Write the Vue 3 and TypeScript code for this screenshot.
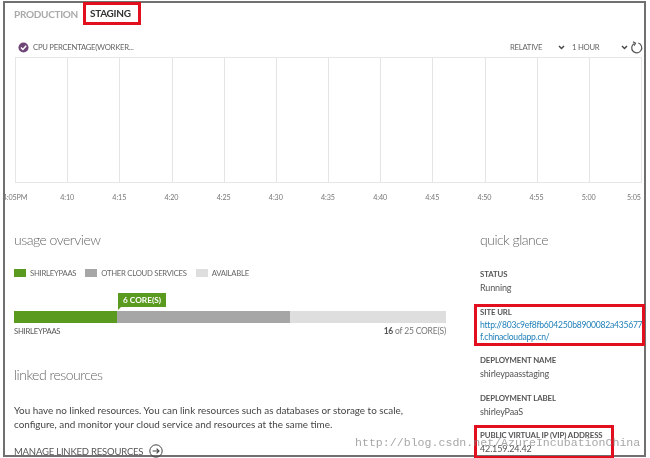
<script setup lang="ts">
const cells: number[] = Array.from({ length: 12 }, (_, i) => i)
const times: string[] = ['4:05PM', '4:10', '4:15', '4:20', '4:25', '4:30', '4:35', '4:40', '4:45', '4:50', '4:55', '5:00', '5:05']
const legend = [
  { name: 'SHIRLEYPAAS', cls: 'green' },
  { name: 'OTHER CLOUD SERVICES', cls: 'gray' },
  { name: 'AVAILABLE', cls: 'light' }
]
</script>

<template>
  <div class="page">
    <div class="frame">
      <nav class="tabs">
        <span class="tab">PRODUCTION</span>
        <span class="tab active">STAGING</span>
      </nav>

      <div class="metric">
        <svg class="check" viewBox="0 0 12 12" width="11" height="11">
          <circle cx="6" cy="6" r="5.5" fill="#6e4577" />
          <path d="M3.2 6.1 5.3 8.1 8.9 4.2" fill="none" stroke="#fff" stroke-width="1.6" />
        </svg>
        <span class="metric-name">CPU PERCENTAGE(WORKER...</span>
        <span class="select relative">RELATIVE</span>
        <svg class="chev" viewBox="0 0 8 6" width="7" height="5"><path d="M1 1.2 4 4.2 7 1.2" fill="none" stroke="#444" stroke-width="1.7" /></svg>
        <span class="select hour">1 HOUR</span>
        <svg class="chev" viewBox="0 0 8 6" width="7" height="5"><path d="M1 1.2 4 4.2 7 1.2" fill="none" stroke="#444" stroke-width="1.7" /></svg>
        <svg class="refresh" viewBox="0 0 14 14" width="13" height="13">
          <path d="M4.6 2.6A5.4 5.4 0 1 0 9 2.2" fill="none" stroke="#555" stroke-width="1.3" />
          <path d="M3.2 0.8 6 2.4 4.4 5" fill="none" stroke="#555" stroke-width="1.2" />
        </svg>
      </div>

      <div class="chart">
        <div v-for="c in cells" :key="c" class="cell"></div>
      </div>
      <div class="axis">
        <span v-for="t in times" :key="t" class="tick"><span>{{ t }}</span></span>
      </div>

      <div class="columns">
        <section class="left">
          <h2>usage overview</h2>
          <div class="legend">
            <span v-for="l in legend" :key="l.name" class="legend-item">
              <i :class="['swatch', l.cls]"></i>{{ l.name }}
            </span>
          </div>
          <div class="tag-row"><span class="tag">6 CORE(S)</span></div>
          <div class="bar">
            <div class="seg green s1"></div>
            <div class="seg gray s2"></div>
            <div class="seg light s3"></div>
          </div>
          <div class="bar-labels">
            <span>SHIRLEYPAAS</span>
            <span class="count"><b>16</b> of 25 CORE(S)</span>
          </div>
          <h2 class="linked">linked resources</h2>
          <p class="desc">
            You have no linked resources. You can link resources such as databases or storage to scale,<br />
            configure, and monitor your cloud service and resources at the same time.
          </p>
          <div class="manage">
            MANAGE LINKED RESOURCES
            <svg viewBox="0 0 14 14" width="14" height="14">
              <circle cx="7" cy="7" r="6.2" fill="none" stroke="#444" stroke-width="1" />
              <path d="M3.6 7H10M7.6 4.6 10 7 7.6 9.4" fill="none" stroke="#444" stroke-width="1.1" />
            </svg>
          </div>
        </section>

        <aside class="right">
          <h2>quick glance</h2>
          <div class="field status">
            <div class="label">STATUS</div>
            <div class="value">Running</div>
          </div>
          <div class="field site">
            <div class="label">SITE URL</div>
            <a class="link">http://803c9ef8fb604250b8900082a435677</a>
            <a class="link">f.chinacloudapp.cn/</a>
          </div>
          <div class="field dep-name">
            <div class="label">DEPLOYMENT NAME</div>
            <div class="value">shirleypaasstaging</div>
          </div>
          <div class="field dep-label">
            <div class="label">DEPLOYMENT LABEL</div>
            <div class="value">shirleyPaaS</div>
          </div>
          <div class="field vip">
            <div class="label">PUBLIC VIRTUAL IP (VIP) ADDRESS</div>
            <div class="value">42.159.24.42</div>
          </div>
        </aside>
      </div>
    </div>
    <div class="watermark">http://blog.csdn.net/AzureIncubationChina</div>
  </div>
</template>

<style>
html, body { margin: 0; background: #fff; }
</style>

<style scoped>
.page {
  position: relative;
  width: 650px;
  height: 458px;
  overflow: hidden;
  padding: 1px 0 0 3px;
  box-sizing: border-box;
  background: #fff;
  font-family: Lato, "Open Sans", sans-serif;
  color: #555;
  filter: blur(0.35px);
}
.frame {
  box-sizing: border-box;
  width: 643px;
  height: 456px;
  border: 2px solid #707070;
  padding-left: 9px;
}
.tabs {
  display: flex;
  align-items: center;
  height: 23px;
  margin-top: -1px;
  font-size: 10px;
  font-weight: 700;
  letter-spacing: -0.3px;
}
.tab { color: #aaa; width: 69px; white-space: nowrap; }
.tab.active {
  box-sizing: border-box;
  width: 58px;
  height: 23px;
  line-height: 17px;
  padding-left: 4px;
  border: 3px solid #e2101f;
  color: #333;
}
.metric {
  display: flex;
  align-items: center;
  height: 14px;
  margin-top: 15px;
  font-size: 7.7px;
  letter-spacing: -0.25px;
  color: #666;
  padding-left: 4px;
  white-space: nowrap;
}
.metric-name { margin-left: 4px; width: 477px; flex: none; }
.select { display: block; flex: none; }
.relative { width: 48px; }
.hour { width: 49px; margin-left: 7px; }
.chev { flex: none; }
.refresh { margin-left: 2px; flex: none; }
.chart {
  display: flex;
  width: 627px;
  height: 126px;
  margin: 3px 0 0 1px;
  box-sizing: border-box;
  border: 1px solid #e6e6e6;
}
.cell { flex: 1; border-left: 1px solid #e4e4e4; }
.cell:first-child { border-left: 0; }
.axis {
  display: flex;
  justify-content: space-between;
  width: 626px;
  height: 12px;
  margin: 9px 0 0 1px;
  font-size: 7.2px;
  letter-spacing: -0.1px;
  line-height: 12px;
  color: #777;
}
.tick { width: 0; display: flex; justify-content: center; white-space: nowrap; }
.tick:last-child { justify-content: flex-end; }
.columns {
  display: flex;
  margin-top: 26px;
}
h2 {
  margin: 0;
  height: 20px;
  font-size: 14px;
  line-height: 20px;
  font-weight: 300;
  letter-spacing: -0.5px;
  color: #666;
}
.left { width: 432px; flex: none; }
.right { width: 164px; margin-left: 34px; flex: none; }
.legend {
  display: flex;
  height: 14px;
  margin-top: 16px;
  font-size: 7.7px;
  letter-spacing: -0.25px;
  line-height: 14px;
  color: #666;
  white-space: nowrap;
}
.legend-item { display: flex; align-items: center; margin-right: 9px; }
.swatch { width: 12px; height: 8px; margin-right: 4px; }
.green { background: #5a9a1e; }
.gray { background: #a6a6a6; }
.light { background: #dedede; }
.tag-row { margin-top: 13px; height: 14px; padding-left: 104px; }
.tag {
  position: relative;
  display: block;
  box-sizing: border-box;
  width: 48px;
  height: 14px;
  background: #5a9a1e;
  color: #fff;
  font-size: 8.3px;
  font-weight: 700;
  line-height: 14px;
  text-align: center;
  white-space: nowrap;
}
.tag::after {
  content: "";
  position: absolute;
  left: 0;
  top: 14px;
  border-top: 3px solid #5a9a1e;
  border-right: 3px solid transparent;
}
.bar { display: flex; height: 12px; margin-top: 4px; }
.s1 { width: 103px; }
.s2 { width: 173px; }
.s3 { flex: 1; }
.bar-labels {
  display: flex;
  justify-content: space-between;
  height: 12px;
  margin-top: 2px;
  font-size: 7.7px;
  letter-spacing: -0.25px;
  line-height: 12px;
  color: #555;
}
.count { font-size: 8.5px; letter-spacing: -0.2px; color: #777; }
.count b { color: #555; }
.linked { margin-top: 28px; }
.desc {
  margin: 18px 0 0;
  font-size: 9.9px;
  line-height: 14px;
  color: #444;
  white-space: nowrap;
}
.manage {
  display: flex;
  align-items: center;
  gap: 6px;
  height: 14px;
  margin-top: 13px;
  font-size: 9.5px;
  letter-spacing: -0.2px;
  color: #555;
  white-space: nowrap;
}
.manage svg { flex: none; }
.label { font-size: 7.8px; letter-spacing: -0.1px; line-height: 14px; font-weight: 700; color: #555; white-space: nowrap; }
.value { font-size: 9px; letter-spacing: -0.15px; line-height: 14px; color: #555; white-space: nowrap; }
.status { margin-top: 17px; }
.site {
  box-sizing: border-box;
  width: 171px;
  height: 42px;
  margin: 9px 0 0 -6px;
  padding-left: 3px;
  border: 3px solid #e2101f;
}
.site .label { line-height: 10px; margin-bottom: 2px; }
.link {
  display: block;
  font-size: 8.6px;
  letter-spacing: -0.25px;
  line-height: 12px;
  color: #1f7fb8;
  white-space: nowrap;
}
.dep-name { margin-top: 7px; }
.dep-label { margin-top: 10px; }
.vip {
  box-sizing: border-box;
  width: 140px;
  height: 34px;
  margin: 6px 0 0 -6px;
  padding-left: 3px;
  border: 3px solid #e2101f;
}
.watermark {
  position: absolute;
  left: 355px;
  top: 436px;
  font-family: "Liberation Mono", monospace;
  font-size: 11.6px;
  line-height: 14px;
  color: rgba(130, 130, 130, 0.7);
  white-space: nowrap;
}
</style>
